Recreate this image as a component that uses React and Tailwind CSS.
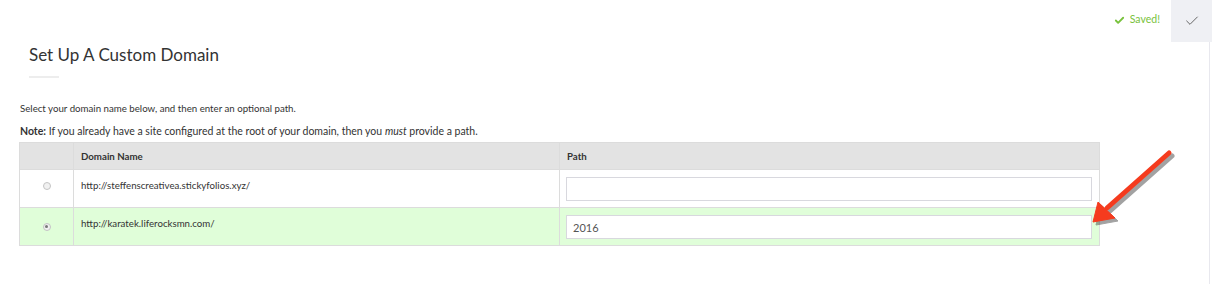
import { Check } from "lucide-react";

const domains = [
  { id: 1, url: "http://steffenscreativea.stickyfolios.xyz/", path: "", selected: false },
  { id: 2, url: "http://karatek.liferocksmn.com/", path: "2016", selected: true },
];

function Radio({ checked }) {
  return (
    <span className="inline-flex h-[8px] w-[8px] items-center justify-center rounded-full border border-[#c4c4c4] bg-[#f1f1f1]">
      {checked && <span className="h-[3px] w-[3px] rounded-full bg-[#777]" />}
    </span>
  );
}

function Arrow() {
  return (
    <svg className="pointer-events-none absolute left-[1080px] top-[140px]" width="100" height="100" viewBox="0 0 100 100">
      <g transform="translate(3 3)" opacity="0.45" fill="#333" stroke="#333">
        <line x1="89" y1="13" x2="27" y2="68" strokeWidth="5" strokeLinecap="round" />
        <polygon points="13,82 18,62 35,78" strokeWidth="1" />
      </g>
      <g fill="#f53b1e" stroke="#f53b1e">
        <line x1="89" y1="13" x2="27" y2="68" strokeWidth="5" strokeLinecap="round" />
        <polygon points="13,82 18,62 35,78" strokeWidth="1" strokeLinejoin="round" />
      </g>
    </svg>
  );
}

export default function App() {
  return (
    <div className="relative flex h-[284px] w-[1212px] bg-white font-['Lato','Open_Sans',sans-serif] text-[#333]">
      <div className="flex-1">
        <div className="flex h-[40px] items-center justify-end gap-[5px] pr-[11px] text-[10.5px] text-[#78c23c]">
          <Check size={11} strokeWidth={4} />
          <span>Saved!</span>
        </div>
        <div className="pl-[29px] pt-[4px]">
          <h1 className="text-[17px] leading-[22px] text-[#333]">Set Up A Custom Domain</h1>
          <div className="mt-[10px] h-[2px] w-[30px] bg-[#ededed]" />
        </div>
        <div className="pl-[20px] pt-[24px]">
          <p className="text-[9.7px] leading-[13px]">Select your domain name below, and then enter an optional path.</p>
          <p className="mt-[10px] text-[10.5px] leading-[13px]">
            <b>Note:</b> If you already have a site configured at the root of your domain, then you <i>must</i> provide a path.
          </p>
        </div>
        <table className="ml-[19px] mt-[4px] w-[1081px] border-collapse text-[9.7px]">
          <thead>
            <tr className="h-[27px] bg-[#e3e3e3]">
              <th className="w-[54px] border border-[#dcdcdc]" />
              <th className="w-[486px] border border-[#dcdcdc] px-[7px] text-left font-bold">Domain Name</th>
              <th className="border border-[#dcdcdc] px-[7px] text-left font-bold">Path</th>
            </tr>
          </thead>
          <tbody>
            {domains.map((d) => (
              <tr key={d.id} className={`h-[38px] ${d.selected ? "bg-[#e0fed9]" : "bg-white"}`}>
                <td className="border border-[#dcdcdc] pt-[9px] text-center align-top">
                  <Radio checked={d.selected} />
                </td>
                <td className="border border-[#dcdcdc] px-[7px] pt-[8px] align-top">{d.url}</td>
                <td className="border border-[#dcdcdc] px-[6px] pt-[7px] pb-[6px] align-top">
                  <input
                    readOnly
                    value={d.path}
                    className="h-[24px] w-[526px] border border-[#d8d8de] bg-white px-[6px] text-[11px] text-[#555] outline-none"
                  />
                </td>
              </tr>
            ))}
          </tbody>
        </table>
      </div>
      <div className="flex w-[41px] flex-col">
        <div className="flex h-[42px] items-center justify-center bg-[#eff0f4] text-[#666]">
          <Check size={16} strokeWidth={1.5} />
        </div>
        <div className="ml-auto mr-[2px] flex-1 w-px bg-[#e8e8ee]" />
      </div>
      <Arrow />
    </div>
  );
}
